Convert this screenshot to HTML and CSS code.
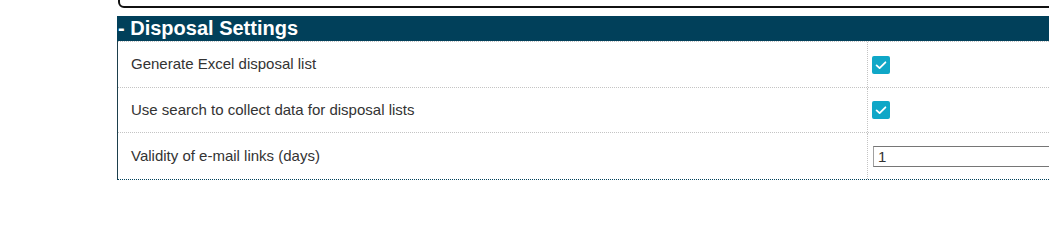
FILE: index.html
```html
<!DOCTYPE html>
<html>
<head>
<meta charset="utf-8">
<link rel="stylesheet" href="styles.css">
</head>
<body>
<div class="page">
  <div class="prev-box"></div>
  <section class="panel">
    <h2 class="panel-title">- Disposal Settings</h2>
    <div class="settings">
      <div class="row r1">
        <div class="label">Generate Excel disposal list</div>
        <div class="value">
          <span class="check"><svg viewBox="0 0 18 18" width="18" height="18"><path d="M4.6 9.4 L7.6 12.1 L13.4 6.3" fill="none" stroke="#fff" stroke-width="1.8" stroke-linecap="round" stroke-linejoin="round"/></svg></span>
        </div>
      </div>
      <div class="row r2">
        <div class="label">Use search to collect data for disposal lists</div>
        <div class="value">
          <span class="check"><svg viewBox="0 0 18 18" width="18" height="18"><path d="M4.6 9.4 L7.6 12.1 L13.4 6.3" fill="none" stroke="#fff" stroke-width="1.8" stroke-linecap="round" stroke-linejoin="round"/></svg></span>
        </div>
      </div>
      <div class="row r3">
        <div class="label">Validity of e-mail links (days)</div>
        <div class="value">
          <input class="num" type="text" value="1">
        </div>
      </div>
    </div>
  </section>
</div>
</body>
</html>
```
FILE: styles.css
```css
html, body {
  margin: 0;
  padding: 0;
  background: #fff;
  overflow: hidden;
}
body {
  width: 1049px;
  height: 207px;
  font-family: "Liberation Sans", Arial, sans-serif;
}
.page {
  padding-left: 117px;
  overflow: hidden;
}
.prev-box {
  margin-left: 1px;
  margin-right: -20px;
  margin-top: -16px;
  height: 20px;
  border: 2px solid #111;
  border-radius: 0 0 6px 6px;
}
.panel {
  margin-top: 8px;
  margin-right: -20px;
}
.panel-title {
  margin: 0;
  height: 25px;
  line-height: 24px;
  background: #01405a;
  color: #fff;
  font-size: 20px;
  font-weight: bold;
  padding-left: 1px;
}
.settings {
  border-left: 1px solid #1d3f4c;
  border-bottom: 1px dotted #00405a;
}
.row {
  display: grid;
  grid-template-columns: 750px 1fr;
  border-top: 1px dotted #c4c4c4;
}
.r1 { height: 45px; }
.r2 { height: 44px; }
.r3 { height: 46px; }
.label {
  display: flex;
  align-items: center;
  padding-left: 13px;
  padding-bottom: 2px;
  font-size: 15px;
  color: #333;
  border-right: 1px dotted #c4c4c4;
}
.value {
  display: flex;
  align-items: center;
  padding-left: 4px;
  overflow: hidden;
}
.check {
  display: block;
  width: 18px;
  height: 18px;
  border-radius: 2px;
  background: #0fa7c7;
}
.check svg {
  display: block;
}
.num {
  box-sizing: border-box;
  margin: 0 0 0 1px;
  width: 300px;
  flex: none;
  height: 21px;
  border: 1px solid #767676;
  border-left-color: #a0a0a0;
  padding: 0 4px;
  font-family: "Liberation Sans", Arial, sans-serif;
  font-size: 15px;
  color: #333;
  outline: none;
}
```
